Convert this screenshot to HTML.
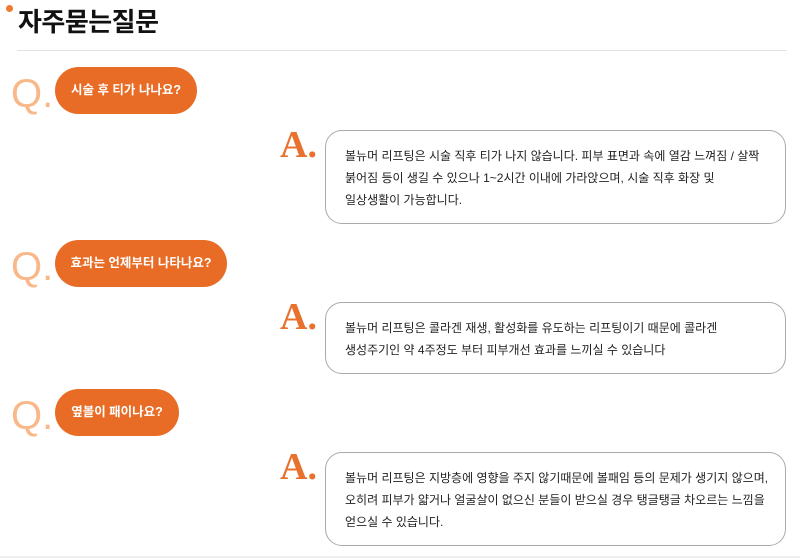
<!DOCTYPE html>
<html><head><meta charset="utf-8"><style>
body{margin:0;width:800px;height:558px;background:#fff;position:relative;overflow:hidden;font-family:"Liberation Sans","Noto Sans CJK KR",sans-serif;}
.a{position:absolute}
.title{left:18px;top:2px;font-size:26px;font-weight:bold;color:#111;letter-spacing:-0.5px}
.dot{left:6px;top:5px;width:7px;height:7px;border-radius:50%;background:#f07a2c}
.hr{left:17px;top:50px;width:770px;height:1px;background:#e2e2e2}
.q{font-family:"Liberation Sans",sans-serif;font-size:40px;color:#f9b88a;left:11px;line-height:1}
.pill{left:55px;height:47px;border-radius:24px;background:#e86c25;color:#fff;font-size:12.5px;font-weight:bold;line-height:47px;text-align:center;white-space:nowrap;box-sizing:border-box}
.an{font-family:"Liberation Serif",serif;font-size:38px;font-weight:bold;color:#e8712d;left:280px;line-height:1}
.box{left:325px;width:461px;border:1px solid #aaa;border-radius:17px;box-sizing:border-box;padding:14px 0 0 19px;font-size:12px;line-height:22px;color:#222;white-space:nowrap}
</style></head><body>
<div class="a dot"></div>
<div class="a title">자주묻는질문</div>
<div class="a hr"></div>

<div class="a q" style="top:74px">Q.</div>
<div class="a pill" style="top:67px;width:142px">시술 후 티가 나나요?</div>
<div class="a an" style="top:126px">A.</div>
<div class="a box" style="top:130px;height:94px">볼뉴머 리프팅은 시술 직후 티가 나지 않습니다. 피부 표면과 속에 열감 느껴짐 / 살짝<br>붉어짐 등이 생길 수 있으나 1~2시간 이내에 가라앉으며, 시술 직후 화장 및<br>일상생활이 가능합니다.</div>

<div class="a q" style="top:247px">Q.</div>
<div class="a pill" style="top:240px;width:172px">효과는 언제부터 나타나요?</div>
<div class="a an" style="top:298px">A.</div>
<div class="a box" style="top:302px;height:72px">볼뉴머 리프팅은 콜라겐 재생, 활성화를 유도하는 리프팅이기 때문에 콜라겐<br>생성주기인 약 4주정도 부터 피부개선 효과를 느끼실 수 있습니다</div>

<div class="a q" style="top:396px">Q.</div>
<div class="a pill" style="top:389px;width:124px">옆볼이 패이나요?</div>
<div class="a an" style="top:448px">A.</div>
<div class="a box" style="top:452px;height:94px">볼뉴머 리프팅은 지방층에 영향을 주지 않기때문에 볼패임 등의 문제가 생기지 않으며,<br>오히려 피부가 얇거나 얼굴살이 없으신 분들이 받으실 경우 탱글탱글 차오르는 느낌을<br>얻으실 수 있습니다.</div>
<div class="a" style="left:0;top:556px;width:800px;height:2px;background:#eee"></div>
</body></html>
